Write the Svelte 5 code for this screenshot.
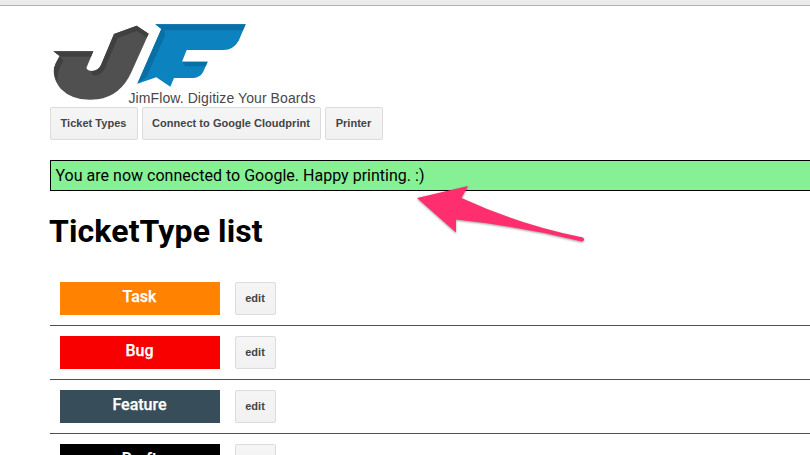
<script>
  const links = [
    { label: 'Ticket Types', width: 88 },
    { label: 'Connect to Google Cloudprint', width: 179 },
    { label: 'Printer', width: 58 }
  ];
  const types = [
    { name: 'Task', color: '#ff8200' },
    { name: 'Bug', color: '#f80000' },
    { name: 'Feature', color: '#374e5a' },
    { name: 'Draft', color: '#000000' }
  ];
</script>

<div class="page">
  <div class="chrome"></div>
  <main>
    <header>
      <svg class="logo" viewBox="30 66 600 240" aria-label="JimFlow">
        <path fill="#505050" d="M40 154H160L139 204Q143 213 157 213Q175 211 183 195L222 102L290 77L326 101L273 219Q241 288 173 298Q101 306 62 266Q31 230 47 190L59 168Z" />
        <path fill="#404040" d="M40 154H160L153 170H70L59 168ZM222 102L290 77L326 101L320 113L290 93L233 115L195 204Q181 231 158 226L152 213Q174 215 183 195ZM59 168L70 182Q49 213 54 246Q32 216 48 189Z" />
        <path fill="#0c82be" d="M346 73H617L596 122Q581 149 550 150H440L426 185H503L489 217Q480 233 460 234H402L391 260L349 232L292 251L364 87Z" />
        <path fill="#0870a6" d="M346 73H617L609 91H372L376 105L319 231L292 251L364 87ZM426 185H503L497 199H437Z" />
      </svg>
      <div class="tagline">JimFlow. Digitize Your Boards</div>
    </header>
    <nav>
      {#each links as link}
        <button style:width="{link.width}px">{link.label}</button>
      {/each}
    </nav>
    <div class="notice"><span>You are now connected to Google. Happy printing. :)</span></div>
    <h1><span>TicketType list</span></h1>
    <div class="list">
      {#each types as type}
        <div class="row">
          <div class="type" style:background={type.color}>{type.name}</div>
          <button class="edit">edit</button>
        </div>
      {/each}
    </div>
  </main>
  <svg class="arrow" viewBox="400 170 200 90" aria-hidden="true">
    <path d="M417 198L468 186L461.500 198Q520 225 583 237.500Q585.500 240 582 241.500Q519 226 456 219.500V232.500Z" />
  </svg>
</div>

<style>
  .page {
    position: relative;
    box-sizing: border-box;
    width: 810px;
    height: 455px;
    overflow: hidden;
    background: #fff;
    font-family: Roboto, sans-serif;
    color: #000;
  }
  .chrome {
    height: 5px;
    background: #ebebeb;
    border-bottom: 1px solid #b0b0b0;
  }
  main { padding: 16px 0 0 50px; }
  header {
    display: grid;
    height: 85px;
  }
  .logo {
    grid-area: 1 / 1;
    width: 200px;
    height: 80px;
  }
  .tagline {
    grid-area: 1 / 1;
    align-self: end;
    margin: 0 0 1px 78.500px;
    font: 14px/16px "Liberation Sans", Arial, sans-serif;
    letter-spacing: 0.09px;
    color: #484848;
    white-space: nowrap;
  }
  nav { display: flex; gap: 4px; }
  button {
    box-sizing: border-box;
    height: 33px;
    padding: 0 1px 0 0;
    border: 1px solid #dcdcdc;
    border-radius: 2px;
    background: linear-gradient(#f5f5f5, #f1f1f1);
    font: bold 11px/31px "Liberation Sans", Arial, sans-serif;
    letter-spacing: 0.03px;
    color: #444;
    text-align: center;
    white-space: nowrap;
  }
  .notice {
    box-sizing: border-box;
    width: 780px;
    height: 31px;
    margin-top: 20px;
    padding-left: 4.500px;
    border: 1px solid #000;
    background: #86f095;
    font-size: 16px;
    letter-spacing: 0.015px;
    line-height: 29px;
  }
  h1 {
    height: 38px;
    margin: 21px 0 22px -1px;
    font-size: 32px;
    font-weight: 700;
    letter-spacing: 0.12px;
    line-height: 38px;
  }
  .row {
    display: flex;
    gap: 15px;
    padding: 10px;
    border-bottom: 1px solid #505050;
  }
  .type {
    box-sizing: border-box;
    width: 160px;
    height: 33px;
    padding-right: 1px;
    font-size: 16px;
    font-weight: 500;
    line-height: 29px;
    text-align: center;
    color: #fff;
    -webkit-text-stroke: 0.25px #fff;
  }
  .edit { width: 41px; }
  .arrow {
    position: absolute;
    left: 400px;
    top: 170px;
    width: 200px;
    height: 90px;
    fill: #ff2e6e;
    filter: drop-shadow(0 1px 1px rgba(0, 0, 0, 0.4));
  }
</style>
